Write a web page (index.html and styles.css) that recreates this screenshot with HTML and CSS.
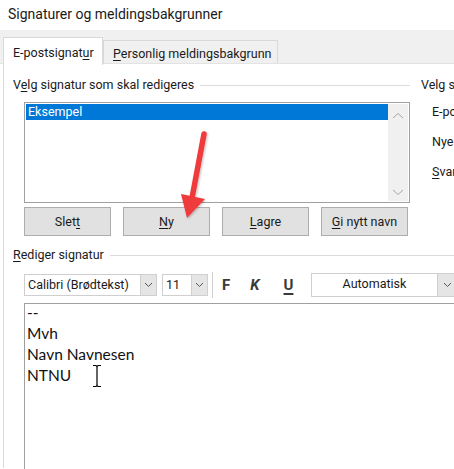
FILE: index.html
```html
<!DOCTYPE html>
<html>
<head>
<meta charset="utf-8">
<link rel="stylesheet" href="styles.css">
</head>
<body>
<div class="titlebar">Signaturer og meldingsbakgrunner</div>
<div class="tabstrip">
  <div class="tab active">E-postsignat<u>u</u>r</div>
  <div class="tab"><u>P</u>ersonlig meldingsbakgrunn</div>
</div>
<div class="panel">
  <div class="top">
    <div class="leftcol">
      <div class="group-head"><span>V<u>e</u>lg signatur som skal redigeres</span><i class="rule"></i></div>
      <div class="listbox">
        <div class="items"><div class="item sel">Eksempel</div></div>
        <div class="scroll">
          <svg width="20" height="12" viewBox="0 0 20 12"><path d="M5 8 L10 3.5 L15 8" fill="none" stroke="#a6a6a6" stroke-width="1"/></svg>
          <svg width="20" height="12" viewBox="0 0 20 12"><path d="M5 4 L10 8.5 L15 4" fill="none" stroke="#a6a6a6" stroke-width="1"/></svg>
        </div>
      </div>
      <div class="buttons">
        <div class="btn">Slet<u>t</u></div>
        <div class="btn"><u>N</u>y</div>
        <div class="btn"><u>L</u>agre</div>
        <div class="btn"><u>G</u>i nytt navn</div>
      </div>
    </div>
    <div class="rightcol">
      <div class="rhead">Velg s</div>
      <div class="ritem">E-po</div>
      <div class="ritem">Nye</div>
      <div class="ritem"><u>S</u>var</div>
    </div>
  </div>
  <div class="group-head wide"><span><u>R</u>ediger signatur</span><i class="rule"></i></div>
  <div class="toolbar">
    <div class="combo font"><span class="val">Calibri (Brødtekst)</span><span class="drop"><svg width="9" height="6" viewBox="0 0 9 6"><path d="M1 1 L4.5 4.5 L8 1" fill="none" stroke="#555" stroke-width="1"/></svg></span></div>
    <div class="combo size"><span class="val">11</span><span class="drop"><svg width="9" height="6" viewBox="0 0 9 6"><path d="M1 1 L4.5 4.5 L8 1" fill="none" stroke="#555" stroke-width="1"/></svg></span></div>
    <i class="sep"></i>
    <span class="fmt b">F</span>
    <span class="fmt k">K</span>
    <span class="fmt u">U</span>
    <div class="combo color"><span class="val center">Automatisk</span><span class="drop"><svg width="9" height="6" viewBox="0 0 9 6"><path d="M1 1 L4.5 4.5 L8 1" fill="none" stroke="#555" stroke-width="1"/></svg></span></div>
  </div>
  <div class="editor">
    <div class="line">--</div>
    <div class="line">Mvh</div>
    <div class="line">Navn Navnesen</div>
    <div class="line">NTNU</div>
  </div>
</div>
<svg class="arrow" width="60" height="110" viewBox="160 120 60 110">
  <defs><filter id="sh" x="-50%" y="-50%" width="200%" height="200%"><feDropShadow dx="1" dy="1" stdDeviation="1" flood-color="#000" flood-opacity="0.25"/></filter></defs>
  <g filter="url(#sh)">
    <path d="M204 134 L192 198" stroke="#f03a3c" stroke-width="5.5" stroke-linecap="round" fill="none"/>
    <path d="M181 194 L205 199 L187 218 Z" fill="#f03a3c"/>
  </g>
</svg>
<svg class="ibeam" width="12" height="24" viewBox="0 0 12 24">
  <path d="M2 1.5 H5 M7 1.5 H10 M5 1.5 Q6 2 6 3.5 V20.5 Q6 22 5 22.5 H2 M7 1.5 Q6 2 6 3.5 M6 20.5 Q6 22 7 22.5 H10" fill="none" stroke="#000" stroke-width="1.2"/>
</svg>
</body>
</html>
```

FILE: styles.css
```css
* { box-sizing: border-box; }
html, body { margin: 0; padding: 0; }
body {
  width: 454px;
  height: 469px;
  overflow: hidden;
  background: #fff;
  font-family: Roboto, "Noto Sans", sans-serif;
  color: #1a1a1a;
  position: relative;
  white-space: nowrap;
}
u { text-decoration: underline; text-underline-offset: 2px; text-decoration-thickness: 1px; }

.titlebar {
  height: 30px;
  padding: 3px 0 0 8px;
  font-size: 14px;
  line-height: 22px;
}

.tabstrip {
  height: 34px;
  background: #f0f0f0;
  padding-left: 3px;
  display: flex;
  align-items: flex-end;
  font-size: 12.5px;
  border-bottom: 1px solid #e3e3e3;
}
.tab {
  height: 23px;
  width: 175px;
  border: 1px solid #d9d9d9;
  border-bottom: none;
  padding: 2px 0 0 9px;
  line-height: 21px;
  background: #f0f0f0;
  flex-shrink: 0;
}
.tab.active {
  width: 100px;
  height: 28px;
  background: #fff;
  margin-bottom: -2px;
  padding-top: 4px;
  position: relative;
  z-index: 1;
}

.panel {
  border-left: 1px solid #d9d9d9;
  margin-left: 3px;
  padding: 13px 0 0 9px;
  font-size: 12.5px;
  height: 404px;
}
.top { display: flex; }
.leftcol { width: 397px; flex-shrink: 0; }
.group-head {
  display: flex;
  align-items: center;
  height: 16px;
  line-height: 16px;
}
.group-head .rule {
  flex: 1;
  height: 1px;
  background: #dcdcdc;
  margin-left: 6px;
}
.listbox {
  margin: 9px 0 0 11px;
  width: 386px;
  height: 101px;
  border: 1px solid #a0a0a0;
  display: flex;
  padding: 1px;
}
.items { flex: 1; }
.item {
  height: 16px;
  line-height: 15px;
  padding-left: 2px;
}
.item.sel { background: #0078d7; color: #fff; }
.scroll {
  width: 20px;
  background: #f0f0f0;
  display: flex;
  flex-direction: column;
  justify-content: space-between;
  padding: 6px 0 3px;
}
.buttons {
  display: flex;
  gap: 12px;
  margin: 4px 0 0 11px;
}
.btn {
  width: 87px;
  height: 29px;
  background: #e1e1e1;
  border: 1px solid #adadad;
  text-align: center;
  line-height: 27px;
  flex-shrink: 0;
}
.rightcol { padding-left: 11px; flex-shrink: 0; }
.rhead { height: 16px; line-height: 16px; }
.ritem { padding-left: 11px; height: 30px; line-height: 20px; }
.rhead + .ritem { margin-top: 9px; }

.group-head.wide { margin-top: 11px; }

.toolbar {
  display: flex;
  align-items: center;
  margin: 9px 0 0 11px;
  height: 26px;
}
.combo {
  height: 22px;
  border: 1px solid #cfcfcf;
  background: #fff;
  display: flex;
  align-items: stretch;
  flex-shrink: 0;
}
.combo .val { flex: 1; padding-left: 3px; line-height: 20px; }
.combo .val.center { text-align: center; padding-left: 0; }
.combo .drop {
  width: 16px;
  background: #e5e5e5;
  border-left: 1px solid #cfcfcf;
  display: flex;
  align-items: center;
  justify-content: center;
}
.combo.font { width: 133px; }
.combo.size { width: 46px; margin-left: 5px; }
.sep { width: 1px; height: 26px; background: #d0d0d0; margin-left: 4px; flex-shrink: 0; }
.fmt { font-weight: bold; font-size: 15px; color: #3a3a3a; text-align: center; flex-shrink: 0; }
.fmt.b { margin-left: 8px; width: 10px; }
.fmt.k { font-style: italic; margin-left: 18px; width: 12px; }
.fmt.u { margin-left: 22px; width: 11px; text-decoration: underline; text-underline-offset: 3px; text-decoration-thickness: 1.5px; }
.combo.color { width: 147px; margin-left: 17px; height: 24px; }
.combo.color .drop { width: 20px; }

.editor {
  margin: 5px 0 0 11px;
  border: 1px solid #a0a0a0;
  border-right: none;
  height: 200px;
  padding: 0 0 0 2px;
  font-family: Lato, "Liberation Sans", sans-serif;
  font-size: 15.5px;
  color: #111;
}
.line { height: 21px; line-height: 21px; }
.line:first-child { margin-top: -2px; }

.arrow { position: absolute; left: 160px; top: 120px; }
.ibeam { position: absolute; left: 91px; top: 364px; }
```
